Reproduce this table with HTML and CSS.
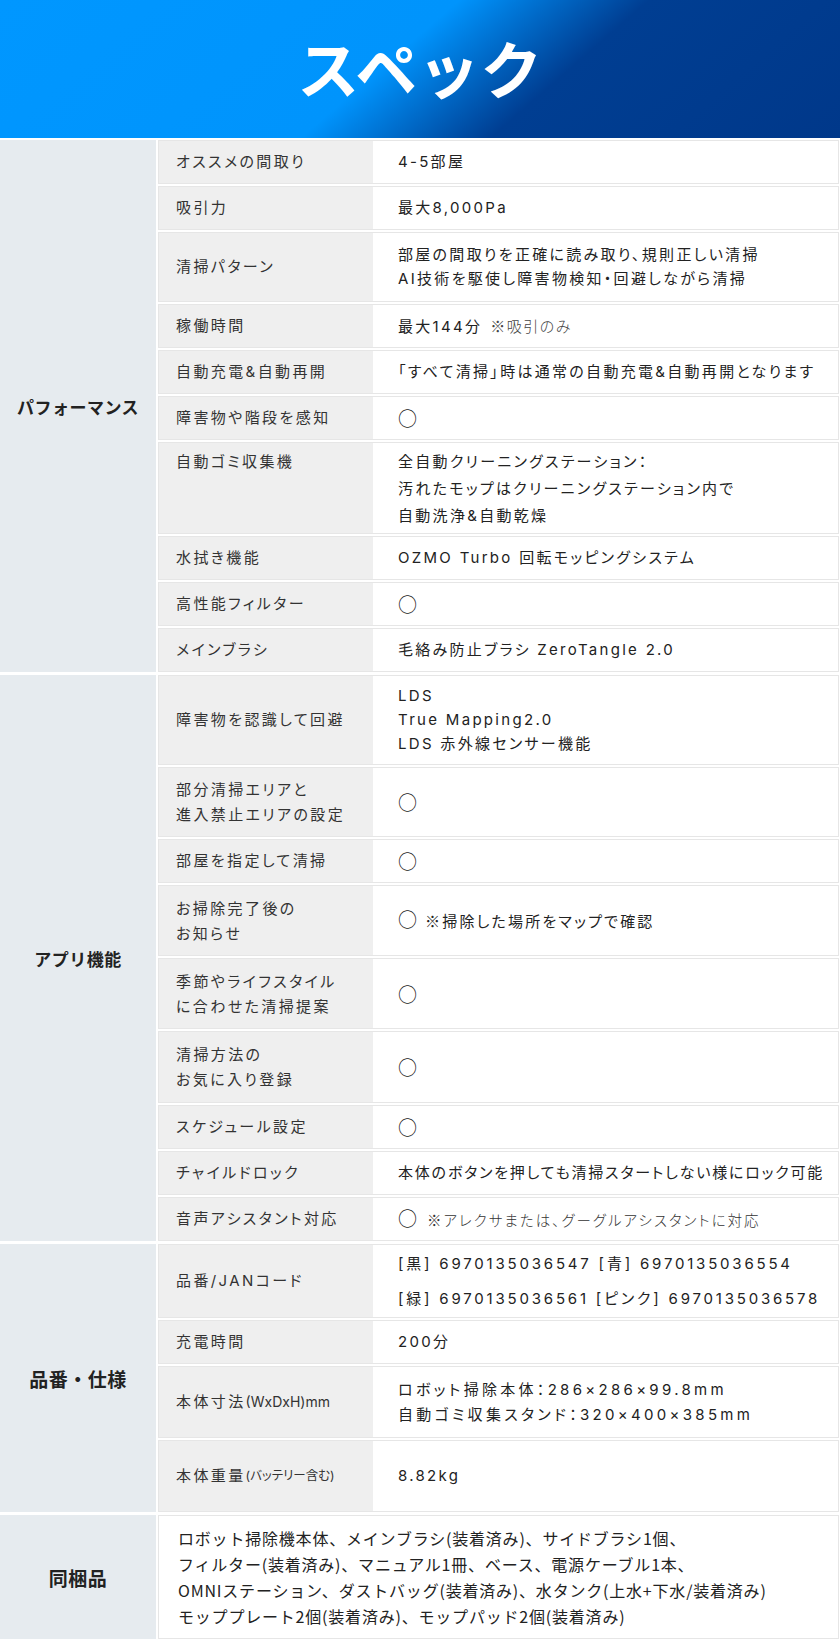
FILE: index.html
```html
<!DOCTYPE html>
<html lang="ja">
<head>
<meta charset="utf-8">
<title>スペック</title>
<link rel="stylesheet" href="styles.css">
</head>
<body>
<header class="hero"><h1 class="hero-title">スペック</h1></header>
<main class="spec">
  <section class="group">
    <div class="group-head">パフォーマンス</div>
    <div class="rows">
      <div class="row"><div class="label">オススメの間取り</div><div class="value">4-5部屋</div></div>
      <div class="row"><div class="label">吸引力</div><div class="value">最大8,000Pa</div></div>
      <div class="row h70"><div class="label">清掃パターン</div><div class="value lh24">部屋の間取りを正確に読み取り、規則正しい清掃<br>AI技術を駆使し障害物検知・回避しながら清掃</div></div>
      <div class="row"><div class="label">稼働時間</div><div class="value"><span>最大144分<span class="note">※吸引のみ</span></span></div></div>
      <div class="row"><div class="label">自動充電&amp;自動再開</div><div class="value">「すべて清掃」時は通常の自動充電&amp;自動再開となります</div></div>
      <div class="row"><div class="label">障害物や階段を感知</div><div class="value"><span class="maru">○</span></div></div>
      <div class="row h92 row-top"><div class="label">自動ゴミ収集機</div><div class="value lh27">全自動クリーニングステーション：<br>汚れたモップはクリーニングステーション内で<br>自動洗浄&amp;自動乾燥</div></div>
      <div class="row"><div class="label">水拭き機能</div><div class="value">OZMO Turbo 回転モッピングシステム</div></div>
      <div class="row"><div class="label">高性能フィルター</div><div class="value"><span class="maru">○</span></div></div>
      <div class="row"><div class="label">メインブラシ</div><div class="value">毛絡み防止ブラシ ZeroTangle 2.0</div></div>
    </div>
  </section>

  <section class="group">
    <div class="group-head">アプリ機能</div>
    <div class="rows">
      <div class="row h90"><div class="label">障害物を認識して回避</div><div class="value lh24">LDS<br>True Mapping2.0<br>LDS 赤外線センサー機能</div></div>
      <div class="row h70"><div class="label lh25">部分清掃エリアと<br>進入禁止エリアの設定</div><div class="value"><span class="maru">○</span></div></div>
      <div class="row"><div class="label">部屋を指定して清掃</div><div class="value"><span class="maru">○</span></div></div>
      <div class="row h71"><div class="label lh25">お掃除完了後の<br>お知らせ</div><div class="value"><span><span class="maru">○</span><span class="note-mid">※掃除した場所をマップで確認</span></span></div></div>
      <div class="row h71"><div class="label lh25">季節やライフスタイル<br>に合わせた清掃提案</div><div class="value"><span class="maru">○</span></div></div>
      <div class="row h72"><div class="label lh25">清掃方法の<br>お気に入り登録</div><div class="value"><span class="maru">○</span></div></div>
      <div class="row"><div class="label">スケジュール設定</div><div class="value"><span class="maru">○</span></div></div>
      <div class="row"><div class="label">チャイルドロック</div><div class="value nowrap tight">本体のボタンを押しても清掃スタートしない様にロック可能</div></div>
      <div class="row"><div class="label">音声アシスタント対応</div><div class="value"><span><span class="maru">○</span><span class="note-sm">※アレクサまたは、グーグルアシスタントに対応</span></span></div></div>
    </div>
  </section>

  <section class="group">
    <div class="group-head head-lg">品番・仕様</div>
    <div class="rows">
      <div class="row h74"><div class="label">品番/JANコード</div><div class="value lh35 codes">[黒] 6970135036547 [青] 6970135036554<br>[緑] 6970135036561 [ピンク] 6970135036578</div></div>
      <div class="row"><div class="label">充電時間</div><div class="value">200分</div></div>
      <div class="row h72"><div class="label">本体寸法<span class="label-sub">(WxDxH)mm</span></div><div class="value lh25 dims">ロボット掃除本体：286×286×99.8mm<br>自動ゴミ収集スタンド：320×400×385mm</div></div>
      <div class="row h72"><div class="label">本体重量<span class="label-xs">(バッテリー含む)</span></div><div class="value">8.82kg</div></div>
    </div>
  </section>

  <section class="group">
    <div class="group-head head-lg">同梱品</div>
    <div class="rows">
      <div class="row h124 row-full"><div class="value bundle">ロボット掃除機本体、メインブラシ(装着済み)、サイドブラシ1個、<br>フィルター(装着済み)、マニュアル1冊、ベース、電源ケーブル1本、<br>OMNIステーション、ダストバッグ(装着済み)、水タンク(上水+下水/装着済み)<br>モッププレート2個(装着済み)、モップパッド2個(装着済み)</div></div>
    </div>
  </section>
</main>
</body>
</html>
```

FILE: styles.css
```css
* { box-sizing: border-box; }

html, body {
  margin: 0;
  padding: 0;
  background: #ffffff;
}

body {
  width: 840px;
  font-family: "Noto Sans CJK JP", sans-serif;
  color: #333333;
}

.hero {
  height: 138px;
  display: flex;
  align-items: center;
  justify-content: center;
  background: linear-gradient(139deg, #0097ff 0%, #0094fc 46%, #003e92 65%, #00388a 100%);
}

.hero-title {
  margin: 0 0 5px;
  font-size: 62px;
  font-weight: 700;
  color: #ffffff;
  line-height: 1;
  letter-spacing: 0.5px;
}

.spec {
  padding: 2px 0 3px;
  display: flex;
  flex-direction: column;
  gap: 3px;
}

.group {
  display: flex;
  gap: 2px;
}

.group-head {
  width: 156px;
  flex: none;
  background: #e6ebef;
  display: flex;
  align-items: center;
  justify-content: center;
  font-size: 17px;
  font-weight: 700;
  letter-spacing: 0.5px;
  color: #222222;
}

.head-lg {
  font-size: 19px;
}

.rows {
  flex: 1;
  margin-right: 1px;
  display: flex;
  flex-direction: column;
  gap: 2px;
}

.row {
  display: flex;
  min-height: 44px;
  border: 1px solid #e6e6e6;
}

.h70 { min-height: 70px; }
.h71 { min-height: 71px; }
.h72 { min-height: 72px; }
.h74 { min-height: 74px; }
.h90 { min-height: 90px; }
.h92 { min-height: 92px; }
.h124 { min-height: 124px; }

.label {
  width: 214px;
  flex: none;
  background: #efefef;
  padding: 0 0 0 17px;
  display: flex;
  align-items: center;
  font-family: Inter, "Noto Sans CJK JP", sans-serif;
  font-size: 15px;
  font-weight: 400;
  font-feature-settings: "palt";
  letter-spacing: 2.4px;
  line-height: 24px;
  color: #333333;
}

.row-top .label {
  align-items: flex-start;
  padding-top: 5px;
  line-height: 27px;
}

.value {
  flex: 1;
  background: #ffffff;
  padding: 0 0 0 25px;
  display: flex;
  flex-direction: column;
  justify-content: center;
  font-family: Inter, "Noto Sans CJK JP", sans-serif;
  font-size: 15px;
  font-weight: 400;
  font-feature-settings: "palt";
  letter-spacing: 2.3px;
  line-height: 24px;
  color: #222222;
}

.nowrap { white-space: nowrap; }
.tight { letter-spacing: 1.8px; }
.codes { letter-spacing: 2.8px; }
.dims { letter-spacing: 3.3px; }

.lh24 { line-height: 24px; }
.lh25 { line-height: 25px; }
.lh27 { line-height: 27px; }
.lh35 { line-height: 35px; }

.maru {
  font-family: "Noto Sans CJK JP", sans-serif;
  font-size: 19px;
  font-weight: 400;
  letter-spacing: 0;
  font-feature-settings: normal;
}

.note,
.note-mid,
.note-sm {
  font-family: "Noto Sans CJK JP", sans-serif;
}

.note {
  margin-left: 8px;
  font-size: 15px;
  font-weight: 300;
  letter-spacing: 1.5px;
  color: #444444;
}

.note-mid {
  margin-left: 8px;
  font-size: 15px;
  letter-spacing: 2.2px;
}

.note-sm {
  margin-left: 10px;
  font-size: 14.5px;
  font-weight: 300;
  letter-spacing: 2px;
  color: #333333;
}

.label-sub {
  font-size: 14px;
  letter-spacing: 0;
}

.label-xs {
  font-size: 12.5px;
  letter-spacing: 0;
}

.row-full .value {
  padding-left: 19px;
}

.bundle {
  font-family: "Noto Sans CJK JP", sans-serif;
  font-size: 16px;
  font-weight: 400;
  font-feature-settings: normal;
  letter-spacing: 0.8px;
  line-height: 26px;
  color: #222222;
}
```
